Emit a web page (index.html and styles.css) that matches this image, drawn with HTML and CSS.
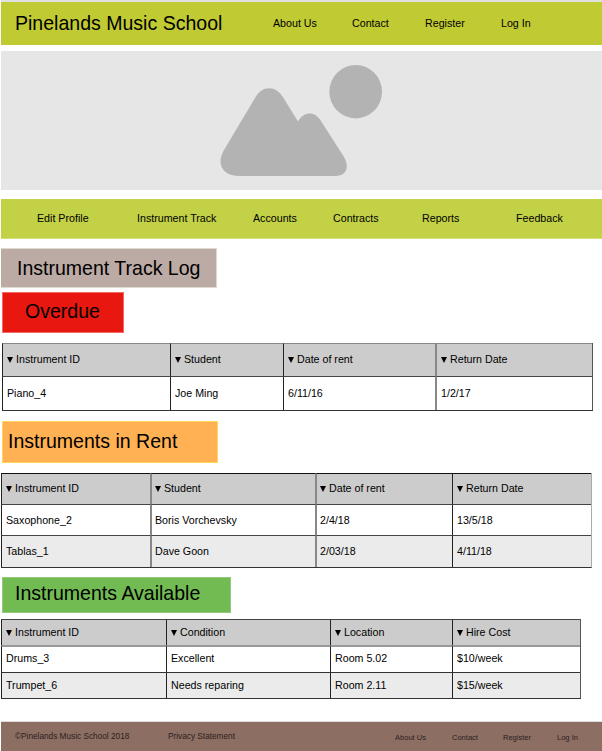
FILE: index.html
```html
<!DOCTYPE html>
<html lang="en">
<head>
<meta charset="utf-8">
<title>Pinelands Music School</title>
<link rel="stylesheet" href="styles.css">
</head>
<body>
<header class="top">
  <h1 class="brand"><span class="t">Pinelands Music School</span></h1>
  <nav class="top-nav">
    <a class="t">About Us</a><a class="t">Contact</a><a class="t">Register</a><a class="t">Log In</a>
  </nav>
</header>
<div class="hero">
  <svg class="hero-art" viewBox="0 0 602 139" width="602" height="139">
    <path d="M255 47C262 34 276 34 283.500 47L298 70.500C304 60 315 60 321 70L344 106C350 117 346 125 335 125H240C222 125 216 113 224 99Z"/>
    <ellipse cx="355.7" cy="40.7" rx="26.3" ry="26.7"/>
  </svg>
</div>
<nav class="menu">
  <a class="t">Edit Profile</a><a class="t">Instrument Track</a><a class="t">Accounts</a><a class="t">Contracts</a><a class="t">Reports</a><a class="t">Feedback</a>
</nav>
<main>
  <h2 class="label log"><span class="t">Instrument Track Log</span></h2>
  <h2 class="label overdue"><span class="t">Overdue</span></h2>
  <table class="grid late">
    <colgroup><col class="a"><col class="b"><col class="c"><col class="d"></colgroup>
    <tr><th><i></i><span class="t">Instrument ID</span></th><th><i></i><span class="t">Student</span></th><th><i></i><span class="t">Date of rent</span></th><th><i></i><span class="t">Return Date</span></th></tr>
    <tr><td><span class="t">Piano_4</span></td><td><span class="t">Joe Ming</span></td><td><span class="t">6/11/16</span></td><td><span class="t">1/2/17</span></td></tr>
  </table>
  <h2 class="label rent"><span class="t">Instruments in Rent</span></h2>
  <table class="grid rented">
    <colgroup><col class="a"><col class="b"><col class="c"><col class="d"></colgroup>
    <tr><th><i></i><span class="t">Instrument ID</span></th><th><i></i><span class="t">Student</span></th><th><i></i><span class="t">Date of rent</span></th><th><i></i><span class="t">Return Date</span></th></tr>
    <tr><td><span class="t">Saxophone_2</span></td><td><span class="t">Boris Vorchevsky</span></td><td><span class="t">2/4/18</span></td><td><span class="t">13/5/18</span></td></tr>
    <tr class="alt"><td><span class="t">Tablas_1</span></td><td><span class="t">Dave Goon</span></td><td><span class="t">2/03/18</span></td><td><span class="t">4/11/18</span></td></tr>
  </table>
  <h2 class="label available"><span class="t">Instruments Available</span></h2>
  <table class="grid free">
    <colgroup><col class="a"><col class="b"><col class="c"><col class="d"></colgroup>
    <tr><th><i></i><span class="t">Instrument ID</span></th><th><i></i><span class="t">Condition</span></th><th><i></i><span class="t">Location</span></th><th><i></i><span class="t">Hire Cost</span></th></tr>
    <tr><td><span class="t">Drums_3</span></td><td><span class="t">Excellent</span></td><td><span class="t">Room 5.02</span></td><td><span class="t">$10/week</span></td></tr>
    <tr class="alt"><td><span class="t">Trumpet_6</span></td><td><span class="t">Needs reparing</span></td><td><span class="t">Room 2.11</span></td><td><span class="t">$15/week</span></td></tr>
  </table>
</main>
<footer class="foot">
  <span class="legal">©Pinelands Music School 2018</span><span class="legal">Privacy Statement</span>
  <a class="t">About Us</a><a class="t">Contact</a><a class="t">Register</a><a class="t">Log In</a>
</footer>
</body>
</html>
```
FILE: styles.css
```css
* { box-sizing: border-box; }
body {
  margin: 0;
  height: 751px;
  overflow: hidden;
  display: flex;
  flex-direction: column;
  background: #fff;
  color: #000;
  font: 11.6px/14px "Liberation Sans", Arial, sans-serif;
}
h1, h2 { margin: 0; font-weight: 400; font-size: 21px; line-height: 24px; }
/* Slightly condensed lettering */
.t {
  display: inline-block;
  white-space: nowrap;
  transform: scaleX(.92);
  transform-origin: 0 50%;
}
h1 .t, h2 .t { transform: scaleX(.93); }
.foot .t { transform: scaleX(.93); }
.top {
  height: 45px;
  margin-left: 1px;
  border-top: 2px solid #e0e0e0;
  background: #c0ca33;
  display: grid;
  grid-template-columns: 272px 1fr;
  padding-top: 9px;
}
.brand { padding-left: 14px; }
.top-nav {
  display: grid;
  grid-template-columns: 79px 73px 76px 1fr;
  padding-top: 5px;
}
.hero { height: 139px; margin: 6px 0 0 1px; background: #e6e6e6; }
.hero-art { display: block; margin-left: -1px; fill: #b3b3b3; }
.menu {
  height: 40px;
  margin: 9px 0 0 1px;
  padding: 12px 0 0 36px;
  background: #c3d147;
  border-bottom: 1px solid #d3de78;
  display: grid;
  grid-template-columns: 100px 116px 80px 89px 94px 1fr;
}
main { height: 482px; }
.label { margin-left: 2px; border: 1px solid; }
.log { width: 216px; height: 40px; margin: 9px 0 0 1px; padding: 7px 0 0 16px; background: #bcaaa4; border-color: #e0d8d5; border-left: 0; }
.overdue { width: 122px; height: 41px; margin-top: 4px; padding: 6px 0 0 22px; background: #e81710; border-color: #f26a64; }
.rent { width: 216px; height: 42px; margin-top: 10px; padding: 7px 0 0 5px; background: #ffb153; border-color: #ffd65c; }
.available { width: 229px; height: 36px; margin-top: 9px; padding: 3px 0 0 12px; background: #72bb53; border-color: #92cb7a; }

.grid {
  table-layout: fixed;
  border-collapse: separate;
  border-spacing: 0;
  border-right: 1px solid #555;
  border-bottom: 1px solid #333;
}
.grid th, .grid td {
  padding: 0 0 1px 4px;
  text-align: left;
  font-weight: 400;
  vertical-align: middle;
  border-left: 1px solid #222;
  border-top: 1px solid #444;
}
.grid th { background: #ccc; white-space: nowrap; }
.grid tr > * { padding-left: 4px; }
.alt td { background: #ebebeb; }
.grid i {
  display: inline-block;
  margin: 0 3px 0 0;
  border: 3.5px solid transparent;
  border-top: 6px solid #000;
  border-bottom: 0;
}
.late { width: 591px; margin: 10px 0 0 2px; }
.late .a { width: 168px; } .late .b { width: 113px; } .late .c { width: 152px; } .late .d { width: 157px; }
.late th { height: 33px; border-top-color: #888; padding-bottom: 2px; }
.late td { height: 34px; }
.late tr > :nth-child(4) { border-left: 2px solid #888; }
.rented { width: 591px; margin: 10px 0 0 1px; border-right-color: #aaa; }
.rented .a { width: 149px; } .rented .b { width: 165px; } .rented .c { width: 137px; } .rented .d { width: 139px; }
.rented th, .rented td { height: 31px; }
.rented th { border-top-color: #111; padding-bottom: 2px; }
.rented .alt td { height: 32px; }
.rented tr > :nth-child(2), .rented tr > :nth-child(3) { border-left: 2px solid #888; padding-left: 3px; }
.free { width: 580px; margin: 6px 0 0 1px; }
.free .a { width: 165px; } .free .b { width: 164px; } .free .c { width: 122px; } .free .d { width: 128px; }
.free th { height: 26px; }
.free td { height: 27px; border-top: 2px solid #999; padding-bottom: 3px; }
.free .alt td { height: 26px; border-top: 1px solid #333; padding-bottom: 2px; }

.foot {
  height: 30px;
  margin-left: 1px;
  padding: 9px 0 0 14px;
  border-top: 1px solid #ddd;
  background: #8d6e63;
  color: #2b211f;
  font-size: 8.1px;
  line-height: 12px;
  display: grid;
  grid-template-columns: 153px 227px 57px 51px 54px 1fr;
}
.legal { font-size: 8.25px; }
.foot .t { padding-top: 1px; }
```
